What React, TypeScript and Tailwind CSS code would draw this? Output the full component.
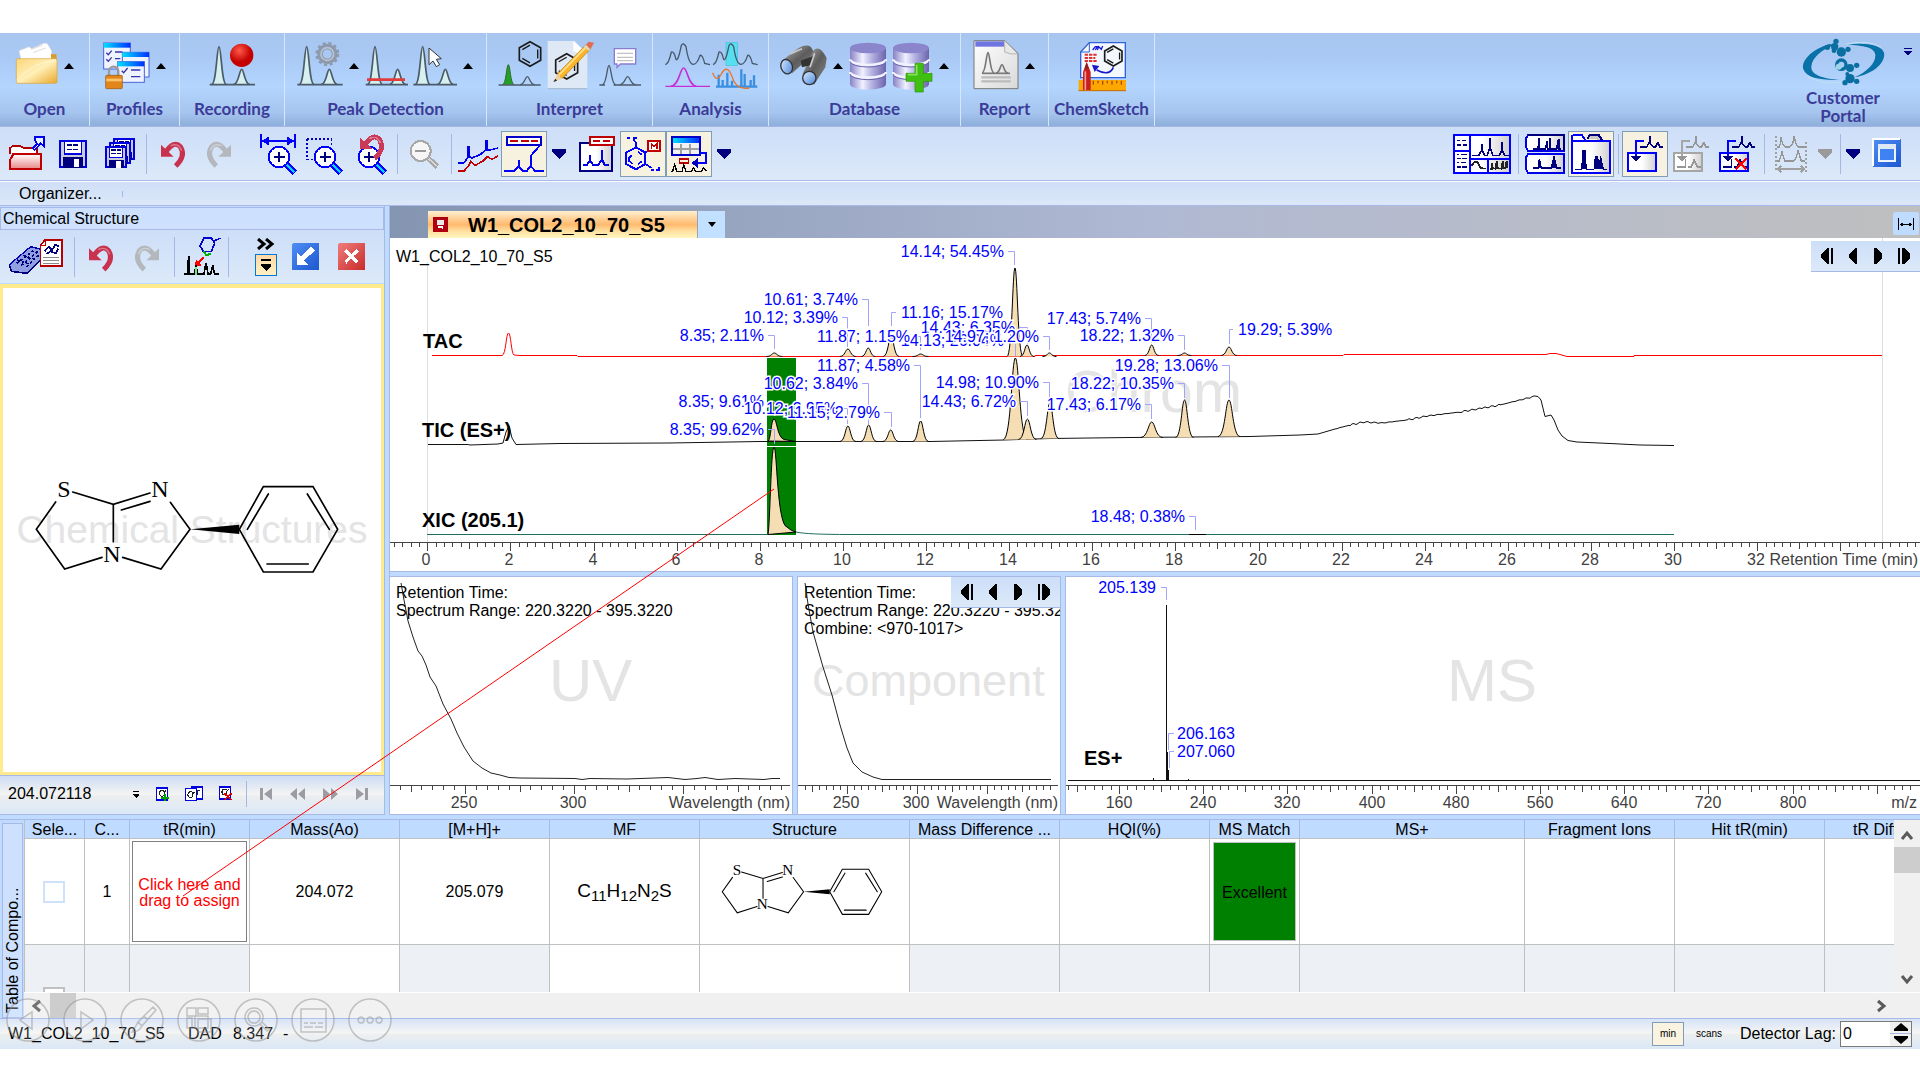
import React from 'react';

type Box = [number, number, number, number];

// Icons are drawn on a grid three times finer than their size on screen.
const Pic: React.FC<{ box: Box; crisp?: boolean; children: React.ReactNode }> = ({
  box,
  crisp,
  children,
}) => (
  <svg
    className="block shrink-0"
    viewBox={box.join(' ')}
    width={box[2] / 3}
    height={box[3] / 3}
    fill="none"
    shapeRendering={crisp ? 'crispEdges' : 'auto'}
    aria-hidden="true"
  >
    {children}
  </svg>
);

const peak = (cx: number, base: number, top: number, hw: number) =>
  `M${cx - hw} ${base}C${cx - hw * 0.35} ${base} ${cx - hw * 0.3} ${top} ${cx} ${top}` +
  `C${cx + hw * 0.3} ${top} ${cx + hw * 0.35} ${base} ${cx + hw} ${base}`;

const points = (list: number[][]) => list.map((p) => p.join(',')).join(' ');

/* ---------- ribbon ---------- */

const RibbonButton: React.FC<{ label: string; box: Box; children: React.ReactNode }> = ({
  label,
  box,
  children,
}) => (
  <button type="button" aria-label={label} className="hover:brightness-110">
    <Pic box={box}>{children}</Pic>
  </button>
);

const RibbonArrow: React.FC<{ label: string }> = ({ label }) => (
  <button type="button" aria-label={label} className="h-14 w-3">
    <svg viewBox="0 0 12 56" width="12" height="56" aria-hidden="true">
      <path d="M1 31L6 25L11 31Z" fill="#000" />
    </svg>
  </button>
);

const TwinPeaks: React.FC<{ x: number; fill?: string }> = ({ x, fill = '#d5f0ee' }) => (
  <g stroke="#4d5a68" strokeWidth="5" fill={fill}>
    <path d={peak(x + 28, 163, 50, 22)} />
    <path d={peak(x + 96, 163, 118, 24)} />
    <path d={`M${x} 164H${x + 136}`} />
  </g>
);

const Hexagon: React.FC<{ cx: number; cy: number; r: number }> = ({ cx, cy, r }) => {
  const ring = (k: number) =>
    [0, 1, 2, 3, 4, 5].map((i) => {
      const a = (Math.PI / 3) * i - Math.PI / 2;
      return [cx + r * k * Math.cos(a), cy + r * k * Math.sin(a)];
    });
  const o = ring(1);
  const n = ring(0.72);
  return (
    <g stroke="#1b1b1b" strokeWidth="5" fill="none">
      <polygon points={points(o)} />
      <path
        d={`M${n[0]}L${n[5]}M${n[1]}L${n[2]}M${n[3]}L${n[4]}`}
        strokeWidth="4"
      />
    </g>
  );
};

const Cylinder: React.FC<{ x: number }> = ({ x }) => (
  <g>
    <path d={`M${x} 54V162a54 17 0 0 0 108 0V54Z`} fill="url(#cyl)" />
    <ellipse cx={x + 54} cy="54" rx="54" ry="16" fill="#8b85cc" />
    <path
      d={`M${x} 88a54 17 0 0 0 108 0M${x} 126a54 17 0 0 0 108 0`}
      stroke="#f2f2ff"
      strokeWidth="8"
    />
    <path
      d={`M${x} 94a54 17 0 0 0 108 0M${x} 132a54 17 0 0 0 108 0`}
      stroke="#6d66ad"
      strokeWidth="3"
    />
  </g>
);

const RibbonGroup: React.FC<{ title: string; width: string; children: React.ReactNode }> = ({
  title,
  width,
  children,
}) => (
  <section
    className={`${width} shrink-0 border-r border-[#d6e6fb] pt-[5px] flex flex-col items-center`}
  >
    <div className="flex gap-[5px]">{children}</div>
    <h2 className="font-[Lato,sans-serif] text-[17px] leading-[30px] font-bold text-[#3b3b98] whitespace-nowrap">
      {title}
    </h2>
  </section>
);

const Ribbon = () => (
  <div className="flex h-[94px] border-b border-[#a4b5e0] bg-[linear-gradient(#a7c5ef,#a9c9f4_25%,#b3d5fe_58%,#a6c5ef_85%,#8eaedb)]">
    <svg width="0" height="0" className="absolute" aria-hidden="true">
      <defs>
        <linearGradient id="folder" x1="0" y1="0" x2="1" y2="1">
          <stop offset="0" stopColor="#fbd57a" />
          <stop offset=".5" stopColor="#fff0b8" />
          <stop offset="1" stopColor="#e9a92c" />
        </linearGradient>
        <linearGradient id="cyl">
          <stop offset="0" stopColor="#8781c6" />
          <stop offset=".35" stopColor="#f1f1ff" />
          <stop offset=".6" stopColor="#b6b3e2" />
          <stop offset="1" stopColor="#6b64ac" />
        </linearGradient>
        <radialGradient id="ball" cx=".4" cy=".3">
          <stop offset="0" stopColor="#ff5a4a" />
          <stop offset="1" stopColor="#c40000" />
        </radialGradient>
        <linearGradient id="lens" x1="0" y1="0" x2="1" y2="1">
          <stop offset="0" stopColor="#d9ecff" />
          <stop offset="1" stopColor="#4d86dc" />
        </linearGradient>
        <linearGradient id="barrel" x1="0" y1="0" x2="1" y2="1">
          <stop offset="0" stopColor="#b4b4b4" />
          <stop offset=".5" stopColor="#5c5c5c" />
          <stop offset="1" stopColor="#8c8c8c" />
        </linearGradient>
        <linearGradient id="page" x1="0" y1="0" x2="1" y2="1">
          <stop offset="0" stopColor="#fff" />
          <stop offset="1" stopColor="#d9d9d9" />
        </linearGradient>
        <linearGradient id="sky" x1="0" y1="0" x2="1" y2="0">
          <stop offset="0" stopColor="#00e0ff" />
          <stop offset="1" stopColor="#0030ff" />
        </linearGradient>
        <linearGradient id="shade" x1="0" y1="0" x2="1" y2="0">
          <stop offset="0" stopColor="#fff" />
          <stop offset=".5" stopColor="#fff" />
          <stop offset="1" stopColor="#cfcfcf" />
        </linearGradient>
        <linearGradient id="pink" x1="0" y1="0" x2="0" y2="1">
          <stop offset="0" stopColor="#fff" />
          <stop offset="1" stopColor="#e98a8a" />
        </linearGradient>
        <linearGradient id="blueBtn" x1="0" y1="0" x2="1" y2="1">
          <stop offset="0" stopColor="#4f8ef5" />
          <stop offset="1" stopColor="#1c57cf" />
        </linearGradient>
        <linearGradient id="redBtn" x1="0" y1="0" x2="1" y2="1">
          <stop offset="0" stopColor="#ef7c7c" />
          <stop offset="1" stopColor="#c92a2a" />
        </linearGradient>
      </defs>
    </svg>

    <RibbonGroup title="Open" width="w-[90px]">
      <RibbonButton label="Open" box={[42, 24, 129, 168]}>
        <path d="M60 90L54 62L84 50L92 56L128 40L138 40L152 62V92Z" fill="#fff" stroke="#d4d4d4" strokeWidth="2" />
        <path d="M90 58L124 46M96 68L134 54" stroke="#dcdcdc" strokeWidth="3" />
        <path d="M150 72H166L168 96H150Z" fill="#d99c2e" />
        <rect x="46" y="86" width="122" height="74" rx="5" fill="url(#folder)" stroke="#dba33a" strokeWidth="2" />
        <path d="M48 150Q90 100 164 90" stroke="#fff6d0" strokeWidth="3" />
      </RibbonButton>
      <RibbonArrow label="Open options" />
    </RibbonGroup>

    <RibbonGroup title="Profiles" width="w-[90px]">
      <RibbonButton label="Profiles" box={[306, 24, 141, 168]}>
        {[
          [308, 39],
          [364, 67],
          [350, 95],
        ].map(([x, y]) => (
          <g key={x}>
            <rect x={x} y={y} width="80" height={x === 308 ? 78 : x === 364 ? 74 : 62} fill="#eef3ff" stroke="#4b62d8" strokeWidth="3" />
            <rect x={x} y={y} width="80" height="14" fill="url(#sky)" />
          </g>
        ))}
        <path d="M316 68l6 6 10-12M342 66h22M316 88l6 6 10-12M342 86h16M362 122l6 6 12-14M390 120h28M390 140h28" stroke="#3737a8" strokeWidth="4" />
        <path d="M324 138v-14a14 14 0 0 1 28 0v14" stroke="#9a9a9a" strokeWidth="7" />
        <rect x="314" y="136" width="50" height="40" rx="3" fill="#e2861c" stroke="#96560f" strokeWidth="2" />
        <path d="M316 150h46" stroke="#ffc46b" strokeWidth="8" />
      </RibbonButton>
      <RibbonArrow label="Profiles options" />
    </RibbonGroup>

    <RibbonGroup title="Recording" width="w-[105px]">
      <RibbonButton label="Recording" box={[630, 24, 138, 168]}>
        <TwinPeaks x={632} />
        <circle cx="728" cy="76" r="35" fill="url(#ball)" />
      </RibbonButton>
    </RibbonGroup>

    <RibbonGroup title="Peak Detection" width="w-[202px]">
      <RibbonButton label="Auto peak detection" box={[891, 24, 138, 168]}>
        <TwinPeaks x={892} />
        <circle cx="982" cy="72" r="22" stroke="#8d9aae" strokeWidth="17" />
        <circle cx="982" cy="72" r="32" stroke="#8d9aae" strokeWidth="8" strokeDasharray="9 8" />
        <circle cx="982" cy="72" r="19" stroke="#b9c3d2" strokeWidth="5" />
      </RibbonButton>
      <RibbonArrow label="Auto peak detection options" />
      <RibbonButton label="Peak threshold" box={[1098, 24, 129, 168]}>
        <g transform="translate(-6 0)">
          <TwinPeaks x={1106} />
        </g>
        <path d="M1104 149H1218" stroke="#e23b3b" strokeWidth="8" />
      </RibbonButton>
      <RibbonButton label="Manual peak detection" box={[1242, 24, 132, 168]}>
        <TwinPeaks x={1243} />
        <path d="M1290 54V104L1302 93L1312 110L1322 104L1312 88L1327 86Z" fill="#fff" stroke="#333" strokeWidth="3" />
      </RibbonButton>
      <RibbonArrow label="Manual peak detection options" />
    </RibbonGroup>

    <RibbonGroup title="Interpret" width="w-[166px]">
      <RibbonButton label="Assign structure" box={[66, 24, 132, 168]}>
        <path d={peak(97, 164, 104, 18)} fill="#23a023" stroke="#2b6a2b" strokeWidth="3" />
        <path d={peak(154, 164, 140, 22)} stroke="#4d5a68" strokeWidth="4" />
        <path d="M68 165H194" stroke="#4d5a68" strokeWidth="4" />
        <Hexagon cx={162} cy={72} r={37} />
      </RibbonButton>
      <RibbonButton label="Edit structure" box={[201, 24, 141, 168]}>
        <path d="M203 33H284L322 72V176H203Z" fill="#dfe8f5" />
        <path d="M203 176H322" stroke="#a5b6cd" strokeWidth="3" />
        <path d="M280 33V62Q290 72 322 72Z" fill="#fff" />
        <Hexagon cx={260} cy={109} r={38} />
        <path d="M232 132L318 44L332 56L246 146Z" fill="#fbb52a" stroke="#b97a10" strokeWidth="2" />
        <path d="M236 136L322 47" stroke="#ffe08a" strokeWidth="5" />
        <path d="M318 44L326 35L342 38L332 56Z" fill="#e26a55" />
        <path d="M314 48L328 60" stroke="#d9d9d9" strokeWidth="6" />
        <path d="M232 132L220 156L246 146Z" fill="#f0cfa0" />
        <path d="M226 146L220 156L231 152Z" fill="#222" />
      </RibbonButton>
      <RibbonButton label="Annotate" box={[354, 24, 129, 168]}>
        <path d={peak(384, 164, 106, 20)} stroke="#4d5a68" strokeWidth="4" />
        <path d={peak(440, 164, 140, 24)} stroke="#4d5a68" strokeWidth="4" />
        <path d="M355 165H372M398 165H480" stroke="#4d5a68" strokeWidth="4" />
        <path d="M400 56H464V102H418L408 112V102H400Z" fill="#fff" stroke="#8a7ccf" strokeWidth="4" />
        <path d="M408 70H456M408 82H456M408 92H456" stroke="#c2c2c2" strokeWidth="4" />
      </RibbonButton>
    </RibbonGroup>

    <RibbonGroup title="Analysis" width="w-[116px]">
      <RibbonButton label="Analysis" box={[552, 24, 282, 168]}>
        <rect x="738" y="38" width="34" height="68" fill="#57dff0" stroke="#38c6de" strokeWidth="2" />
        {[0, 143].map((d) => (
          <g key={d} stroke="#47586b" strokeWidth="4">
            <path d={`M${556 + d} 104Q${566 + d} 102 ${574 + d} 66Q${582 + d} 62 ${588 + d} 88Q${594 + d} 96 ${604 + d} 46Q${610 + d} 36 ${618 + d} 50Q${626 + d} 104 ${640 + d} 103Q${652 + d} 102 ${660 + d} 76Q${668 + d} 74 ${674 + d} 100L${690 + d} 104`} />
          </g>
        ))}
        <path d={peak(611, 168, 114, 38)} stroke="#c62fd6" strokeWidth="5" />
        <path d="M556 169H690" stroke="#c62fd6" strokeWidth="4" />
        <path d="M708 170H832M716 170V134M728 170V150M742 170V128M756 170V152M784 170V118M794 170V132M812 170V150M822 170V136" stroke="#3a8fe0" strokeWidth="7" />
        <path d="M698 128Q710 160 724 132Q742 100 756 140Q768 182 808 174" stroke="#e8762c" strokeWidth="4" />
      </RibbonButton>
    </RibbonGroup>

    <RibbonGroup title="Database" width="w-[192px]">
      <RibbonButton label="Search database" box={[900, 24, 141, 168]}>
        <path d="M904 94L956 54Q978 42 992 50L1004 70L936 130Z" fill="url(#barrel)" />
        <path d="M968 132L1000 62Q1018 42 1040 84L1036 112L1002 164Z" fill="url(#barrel)" />
        <path d="M962 92L1000 78L990 106L966 112Z" fill="#333" />
        <path d="M930 72L966 56M1004 70L990 112" stroke="#c9c9c9" strokeWidth="5" />
        <ellipse cx="920" cy="110" rx="17" ry="22" fill="url(#lens)" stroke="#333" strokeWidth="4" transform="rotate(-18 920 110)" />
        <ellipse cx="988" cy="144" rx="20" ry="20" fill="url(#lens)" stroke="#333" strokeWidth="4" />
      </RibbonButton>
      <RibbonArrow label="Search options" />
      <RibbonButton label="Open database" box={[1107, 24, 114, 168]}>
        <Cylinder x={1110} />
      </RibbonButton>
      <RibbonButton label="Add to database" box={[1236, 24, 123, 168]}>
        <Cylinder x={1239} />
        <path d="M1305 100H1330V130H1356V154H1330V186H1305V154H1278V130H1305Z" fill="#3fbf10" stroke="#2c960a" strokeWidth="2" />
        <path d="M1310 104V134H1284" stroke="#86e45c" strokeWidth="5" />
      </RibbonButton>
      <RibbonArrow label="Database options" />
    </RibbonGroup>

    <RibbonGroup title="Report" width="w-[88px]">
      <RibbonButton label="Report" box={[39, 24, 138, 168]}>
        <path d="M42 32H134L174 70V176H42Z" fill="url(#page)" stroke="#777" strokeWidth="3" />
        <path d="M46 34H132V50H46Z" fill="#6f74e0" />
        <path d="M134 32V66Q150 74 174 72Z" fill="#e8e8e8" stroke="#999" strokeWidth="2" />
        <path d={peak(84, 129, 68, 18)} stroke="#777" strokeWidth="5" />
        <path d={peak(126, 129, 104, 18)} stroke="#777" strokeWidth="5" />
        <path d="M66 130H150" stroke="#777" strokeWidth="5" />
        <path d="M64 142H152M64 154H152" stroke="#bbb" strokeWidth="7" />
      </RibbonButton>
      <RibbonArrow label="Report options" />
    </RibbonGroup>

    <RibbonGroup title="ChemSketch" width="w-[106px]">
      <RibbonButton label="ChemSketch" box={[354, 24, 144, 168]}>
        <path d="M388 38H496V143H362V66Z" fill="#f3f8ff" stroke="#2f62d8" strokeWidth="4" />
        <path d="M388 38V66H362" stroke="#2f62d8" strokeWidth="3" />
        <path d="M398 60l8-10h6l-6 10M412 60l4-10 8 8 4-10" stroke="#1717d8" strokeWidth="4" />
        <path d="M374 74h36M374 84h32M374 93h36" stroke="#e03030" strokeWidth="6" strokeDasharray="10 3" />
        <Hexagon cx={460} cy={78} r={30} />
        <path d="M460 112Q448 140 410 120" stroke="#1717c8" strokeWidth="5" />
        <path d="M396 104L418 108L404 126Z" fill="#1717c8" />
        <rect x="356" y="150" width="142" height="32" fill="#fca800" />
        <path d="M356 182H498" stroke="#c46a00" strokeWidth="3" />
        <path d="M400 152v12M414 152v8M428 152v12M442 152v8M456 152v12M470 152v8M484 152v12" stroke="#b34a00" strokeWidth="4" />
        <path d="M380 96L392 126V180H369V126Z" fill="#c81e1e" />
        <path d="M376 124V180" stroke="#ff9a9a" strokeWidth="5" />
        <path d="M380 96L386 116H374Z" fill="#8a2020" />
      </RibbonButton>
    </RibbonGroup>

    <div className="flex flex-1 items-start justify-end pt-[5px] pr-2">
      <a href="#portal" className="mr-2 flex w-[106px] flex-col items-center font-[Lato,sans-serif] text-[17px] leading-[18px] font-bold text-[#3b3b98] text-center">
        <Pic box={[1086, 24, 249, 147]}>
          <path d="M1168 42C1110 60 1082 96 1090 118C1098 142 1140 152 1200 150C1146 146 1112 134 1114 110C1116 84 1146 56 1184 46Z" fill="#0871a8" />
          <path d="M1222 44C1270 36 1326 44 1332 68C1338 98 1300 132 1244 142C1280 126 1308 100 1306 74C1304 52 1270 46 1222 44Z" fill="#0871a8" />
          <path d="M1104 140Q1140 162 1204 158M1218 42Q1290 28 1324 52" stroke="#bfe3f3" strokeWidth="3" />
          <g fill="#0a6fa0">
            <circle cx="1188" cy="34" r="8" />
            <circle cx="1162" cy="52" r="8" />
            <circle cx="1184" cy="50" r="11" />
            <circle cx="1204" cy="66" r="14" />
            <circle cx="1224" cy="58" r="8" />
            <circle cx="1182" cy="62" r="7" />
            <circle cx="1230" cy="114" r="12" />
            <circle cx="1250" cy="106" r="8" />
            <circle cx="1230" cy="146" r="14" />
            <circle cx="1250" cy="154" r="8" />
            <circle cx="1215" cy="158" r="8" />
            <circle cx="1222" cy="132" r="6" />
          </g>
          <circle cx="1204" cy="104" r="14" stroke="#0a6fa0" strokeWidth="10" />
          <circle cx="1196" cy="110" r="9" fill="#9fd3e6" />
        </Pic>
        <span className="pt-0.5">Customer Portal</span>
      </a>
      <button type="button" aria-label="Ribbon options" className="mt-2.5 w-2">
        <svg width="8" height="8" viewBox="0 0 8 8" shapeRendering="crispEdges" aria-hidden="true">
          <path d="M0 0H8V1H0ZM0 3H8L4 8Z" fill="#00007f" />
        </svg>
      </button>
    </div>
  </div>
);

/* ---------- toolbars ---------- */

const Tool: React.FC<{
  label: string;
  box: Box;
  pressed?: boolean;
  disabled?: boolean;
  soft?: boolean;
  children: React.ReactNode;
}> = ({ label, box, pressed, disabled, soft, children }) => (
  <button
    type="button"
    aria-label={label}
    aria-pressed={pressed}
    disabled={disabled}
    className={
      pressed
        ? 'flex h-[46px] w-[46px] shrink-0 items-center overflow-hidden bg-[#f7f2df] outline outline-1 -outline-offset-1 outline-[#7f9db9]'
        : 'flex h-[46px] shrink-0 items-center overflow-hidden'
    }
  >
    <Pic box={box} crisp={!soft}>
      {children}
    </Pic>
  </button>
);

const Sep = () => (
  <span className="flex w-2 shrink-0 justify-center" aria-hidden="true">
    <span className="h-10 w-px bg-[#a4b7e6]" />
  </span>
);

const DropArrow: React.FC<{ label: string; width: string; color?: string }> = ({
  label,
  width,
  color = '#00007f',
}) => (
  <button type="button" aria-label={label} className={`${width} flex h-[46px] shrink-0 items-center justify-center`}>
    <svg width="14" height="10" viewBox="0 0 14 10" shapeRendering="crispEdges" aria-hidden="true">
      <path d="M0 0H14V3L7 10L0 3Z" fill={color} />
    </svg>
  </button>
);

const UndoShape: React.FC<{ x: number; y: number; color: string; flip?: boolean }> = ({
  x,
  y,
  color,
  flip,
}) => (
  <g transform={flip ? `translate(${x + 72} ${y}) scale(-1 1)` : `translate(${x} ${y})`}>
    <path d="M14 32Q40 -4 58 16Q76 44 44 74" stroke={color} strokeWidth="15" />
    <path d="M0 10V46H38Z" fill={color} />
    <path d="M28 14Q52 2 62 28" stroke="#fff" strokeOpacity=".35" strokeWidth="4" />
  </g>
);

const Magnifier: React.FC<{ x: number; y: number }> = ({ x, y }) => (
  <g>
    <circle cx={x} cy={y} r="31" fill="#fff" stroke="#0000ff" strokeWidth="6" />
    <path d={`M${x - 15} ${y}h32M${x} ${y - 16}v32`} stroke="#00007f" strokeWidth="6" />
    <path d={`M${x + 22} ${y + 22}l26 26`} stroke="#0000ff" strokeWidth="18" />
    <path d={`M${x + 24} ${y + 24}l22 22`} stroke="#00d8ff" strokeWidth="7" />
  </g>
);

const Floppy: React.FC<{ x: number; y: number; s: number }> = ({ x, y, s }) => (
  <g>
    <rect x={x} y={y} width={s} height={s} fill="#0000e0" />
    <rect x={x + 5} y={y + 5} width={s - 10} height={s - 10} fill="#c8ccd8" />
    <rect x={x + s * 0.2} y={y + 4} width={s * 0.6} height={s * 0.45} fill="#fff" stroke="#0000e0" strokeWidth="4" />
    <path d={`M${x + s * 0.28} ${y + s * 0.18}h${s * 0.44}M${x + s * 0.28} ${y + s * 0.34}h${s * 0.44}`} stroke="#00007f" strokeWidth="4" strokeDasharray="14 5" />
    <rect x={x + s * 0.16} y={y + s * 0.62} width={s * 0.7} height={s * 0.38} fill="#00007f" />
    <rect x={x + s * 0.52} y={y + s * 0.68} width={s * 0.2} height={s * 0.3} fill="#fff" />
  </g>
);

const LoadFrame: React.FC<{ x: number; color: string; line: string; filled?: boolean }> = ({
  x,
  color,
  line,
  filled,
}) => (
  <g>
    <rect x={x + 18} y="369" width="84" height="54" fill="url(#shade)" stroke={color} strokeWidth="6" />
    <path d={`M${x + 42} 384V333H${x + 66}`} stroke={color} strokeWidth="6" />
    <path d={`M${x + 27} 378H${x + 57}L${x + 42} 396Z`} fill={line} />
    <path d={`M${x + 54} 351H${x + 74}L${x + 82} 336V318M${x + 84} 318V340L${x + 94} 351H${x + 100}L${x + 108} 338L${x + 114} 351H${x + 124}`} stroke={line} strokeWidth="5" />
    {filled && (
      <path d={`M${x + 26} 411H${x + 52}V388M${x + 60} 411H${x + 70}L${x + 78} 390L${x + 88} 411H${x + 98}`} stroke={line} strokeWidth="5" />
    )}
  </g>
);

const MainToolbar = () => (
  <div role="toolbar" aria-label="Main" className="flex h-[54px] items-center border-b border-[#a9b9e9] bg-linear-to-b from-[#cddef8] to-[#dce9f9] pl-1 pr-2">
    <Tool label="Open file" box={[12, 303, 138, 138]}>
      <path d="M30 372V354L38 348H62L70 354H110V372" fill="#fff" stroke="#b00000" strokeWidth="5" />
      <path d="M30 416V390L40 372H122V416Z" fill="url(#pink)" stroke="#c00000" strokeWidth="6" />
      <path d="M98 354L112 342L104 330V321H132V350L122 340L104 360Z" fill="#e8f4ff" stroke="#0000e8" strokeWidth="5" />
    </Tool>
    <Tool label="Save" box={[150, 303, 138, 138]}>
      <Floppy x={177} y={330} s={84} />
    </Tool>
    <Tool label="Save all" box={[288, 303, 138, 138]}>
      <Floppy x={339} y={324} s={66} />
      <Floppy x={327} y={336} s={66} />
      <Floppy x={315} y={348} s={66} />
    </Tool>
    <Sep />
    <Tool label="Undo" box={[450, 303, 138, 138]} soft>
      <UndoShape x={483} y={334} color="#c8324f" />
    </Tool>
    <Tool label="Redo" box={[588, 303, 138, 138]} disabled soft>
      <UndoShape x={621} y={334} color="#b4b8bd" flip />
    </Tool>
    <div className="ml-[13px]">
      <Tool label="Zoom horizontally" box={[765, 303, 138, 138]}>
        <path d="M783 312V354M885 312V354M786 333H882" stroke="#0000ff" strokeWidth="6" />
        <path d="M786 333L806 320V346ZM882 333L862 320V346Z" fill="#0000ff" />
        <Magnifier x={837} y={381} />
      </Tool>
    </div>
    <Tool label="Zoom in" box={[903, 303, 138, 138]}>
      <path d="M921 327H996M921 327V388H942M994 327V346" stroke="#0000c0" strokeWidth="5" strokeDasharray="6 6" />
      <Magnifier x={975} y={381} />
    </Tool>
    <Tool label="Undo zoom" box={[1041, 303, 138, 138]}>
      <Magnifier x={1107} y={381} />
      <UndoShape x={1080} y={312} color="#c83a58" />
    </Tool>
    <Sep />
    <Tool label="Zoom out" box={[1203, 303, 138, 138]} disabled>
      <circle cx="1262" cy="363" r="30" fill="#f6f6f6" stroke="#a8a8a8" strokeWidth="6" />
      <path d="M1246 363h32" stroke="#9a9a9a" strokeWidth="6" />
      <path d="M1284 384l28 26" stroke="#a8a8a8" strokeWidth="16" />
      <path d="M1286 386l24 22" stroke="#d8d8d8" strokeWidth="5" />
    </Tool>
    <Sep />
    <Tool label="Overlay curves" box={[-75, 303, 138, 138]}>
      <path d="M-66 398H-48L-36 382V348M-33 348V380L-24 384L0 374L18 360V330M22 330V362L54 354" stroke="#0000e8" strokeWidth="5" />
      <path d="M-66 423H-48L-36 410L-28 394L-14 406L10 392L22 380L36 388L54 378" stroke="#c00000" strokeWidth="5" />
    </Tool>
    <Tool label="Peak labels" box={[63, 303, 138, 138]} pressed>
      <rect x="81" y="321" width="102" height="24" fill="#fff" stroke="#0000c8" strokeWidth="6" />
      <path d="M90 333H174" stroke="#c00000" strokeWidth="5" strokeDasharray="24 8" />
      <path d="M178 348L154 376V408M72 423H102L116 410V390V410L128 423H140L152 408L166 423H192" stroke="#0000ff" strokeWidth="6" />
    </Tool>
    <DropArrow label="Peak label options" width="w-6" />
    <div className="ml-[3px]">
      <Tool label="Annotations" box={[282, 303, 138, 138]}>
        <rect x="300" y="339" width="96" height="84" fill="url(#shade)" stroke="#00007f" strokeWidth="6" />
        <rect x="330" y="321" width="72" height="24" fill="#fff" stroke="#c00000" strokeWidth="6" />
        <path d="M338 333H396" stroke="#c00000" strokeWidth="5" strokeDasharray="22 8" />
        <path d="M310 405H320L330 392V374V392L340 405H354L366 388V360V388L374 405H386" stroke="#0000e0" strokeWidth="6" />
      </Tool>
    </div>
    <Tool label="Show structures" box={[420, 303, 138, 138]} pressed>
      <path d="M468 352L496 368V402L468 418L438 402V368Z" stroke="#0000ff" strokeWidth="6" />
      <path d="M456 376L446 384V392L458 402M474 366L486 374M474 402L486 394M468 352V338L460 328M442 324h8M460 324h10M496 402L514 414M514 420h8M528 420h8V412M496 368L506 360" stroke="#0000ff" strokeWidth="5" />
      <rect x="504" y="333" width="36" height="30" fill="#fff" stroke="#c00000" strokeWidth="6" />
      <path d="M514 356V342L522 350L530 342V356" stroke="#c00000" strokeWidth="5" />
    </Tool>
    <Tool label="Show table" box={[558, 303, 138, 138]} pressed>
      <rect x="576" y="321" width="84" height="54" fill="#f2f2f2" stroke="#0000c8" strokeWidth="6" />
      <rect x="579" y="324" width="78" height="15" fill="url(#sky)" />
      <path d="M579 356H657M603 341V372M630 341V372" stroke="#a0a0a0" strokeWidth="5" />
      <path d="M660 369H678V399H640" stroke="#0000ff" strokeWidth="6" />
      <path d="M634 399L654 384V414Z" fill="#0000c0" />
      <rect x="598" y="387" width="27" height="12" stroke="#c00000" strokeWidth="5" />
      <path d="M573 424H578L584 404L590 424H606L611 404L618 424H634L640 414L648 424H664L670 414L680 424" stroke="#000" strokeWidth="4" />
    </Tool>
    <DropArrow label="Table options" width="w-6" />

    <div className="ml-auto flex items-center">
      <Tool label="Full layout" box={[30, 303, 192, 138]}>
        <rect x="42" y="315" width="168" height="114" fill="url(#shade)" stroke="#0000ff" strokeWidth="6" />
        <path d="M90 315V429M42 363H90M90 387H210M144 387V429" stroke="#0000ff" strokeWidth="6" />
        <path d="M50 332h10M66 332h12M50 345h14M70 345h10M50 374h8M64 374h16M50 386h12M66 386h14M50 398h8M64 398h14M50 411h12M66 411h14" stroke="#00007f" strokeWidth="4" />
        <path d="M96 376H116L126 360V342V360L134 376H142L150 352V324V352L158 376H178L186 360V336V360L194 376H206" stroke="#00007f" strokeWidth="5" />
        <path d="M94 408L104 396H112L122 414L138 416M150 416H156V400V414L166 416L170 394V414L184 416L188 394V414H196L200 392V414" stroke="#222" strokeWidth="5" />
      </Tool>
      <Sep />
      <Tool label="Two windows" box={[246, 303, 138, 138]}>
        <path d="M264 315H372V363H264L258 352V326ZM264 372H372V429H264L258 418V382Z" fill="url(#shade)" stroke="#0000e8" strokeWidth="6" />
        <path d="M264 315H372V363" stroke="#00007f" strokeWidth="6" />
        <path d="M280 357H294L298 324V357H316L322 332V357H330V324M330 330V357H350V357L356 326V357H364" stroke="#00007f" strokeWidth="5" />
        <path d="M280 414H294L298 386L304 414H334L342 378L350 414H362" fill="#00007f" stroke="#00007f" strokeWidth="4" />
      </Tool>
      <Tool label="Tabbed window" box={[384, 303, 138, 138]} pressed>
        <path d="M396 333V318L402 315H426L434 328V333" fill="#fff" stroke="#0000ff" strokeWidth="6" />
        <path d="M442 326L450 315H476L486 330" fill="#c8c8c8" stroke="#00007f" strokeWidth="6" />
        <rect x="396" y="333" width="114" height="96" fill="url(#shade)" stroke="#0000ff" strokeWidth="6" />
        <path d="M406 417H424L428 384V360H436V384L440 417H462L466 378H472L478 402L482 378L490 417H502" fill="#00007f" stroke="#00007f" strokeWidth="3" />
      </Tool>
      <Sep />
      <Tool label="Load into window" box={[546, 303, 138, 138]} pressed>
        <LoadFrame x={546} color="#0000ff" line="#00007f" />
      </Tool>
      <Tool label="Add to window" box={[684, 303, 138, 138]} disabled>
        <LoadFrame x={684} color="#a6a6a6" line="#969696" filled />
      </Tool>
      <Tool label="Replace in window" box={[822, 303, 138, 138]}>
        <LoadFrame x={822} color="#0000ff" line="#00007f" filled />
        <path d="M886 384L920 418M920 384L886 418" stroke="#ff0000" strokeWidth="7" />
      </Tool>
      <Sep />
      <Tool label="Link windows" box={[984, 303, 138, 138]} disabled>
        <path d="M1008 318V426M1098 336V426" stroke="#a0a0a0" strokeWidth="5" strokeDasharray="6 6" />
        <path d="M1010 351H1018L1022 336V320L1028 342L1036 351H1050L1058 342L1062 318L1068 342L1076 351H1098M1010 393H1018L1026 366L1034 393H1060L1068 384L1074 362L1084 393H1096" stroke="#969696" strokeWidth="4" />
        <path d="M1014 417H1092M1024 407L1014 417L1024 427M1082 407L1092 417L1082 427" stroke="#a0a0a0" strokeWidth="5" />
      </Tool>
      <DropArrow label="Link options" width="w-[22px]" color="#9a9a9a" />
      <Sep />
      <DropArrow label="More options" width="w-[18px]" />
      <div className="ml-1">
        <Tool label="Restore window" box={[1278, 303, 138, 138]}>
          <rect x="1299" y="327" width="84" height="84" fill="url(#blueBtn)" />
          <path d="M1299 408V327H1380" stroke="#fff" strokeWidth="5" />
          <rect x="1317" y="345" width="48" height="48" fill="#3f82f4" stroke="#eef4ff" strokeWidth="6" />
          <rect x="1314" y="342" width="54" height="15" fill="#dfe8f5" />
        </Tool>
      </div>
    </div>
  </div>
);

/* ---------- chemical structure ---------- */

const Molecule: React.FC<{ width: number; height: number; font: number; pen: number }> = ({
  width,
  height,
  font,
  pen,
}) => (
  <svg viewBox="96 108 930 300" width={width} height={height} className="block overflow-visible" aria-hidden="true">
    <g stroke="#000" strokeWidth={pen} fill="none" strokeLinecap="round">
      <path d="M218 159L340 196L450 162M364 213L450 187M340 196V308M306 355L194 390L109 271L167 189M368 355L483 390L570 271L511 190" />
      <path d="M718 271L790 143H939L1013 271L939 399H790ZM742 271L805 165M922 165L988 271M801 375H925" />
    </g>
    <path d="M570 271L718 257V285Z" fill="#000" />
    <g fontFamily="'Liberation Serif', serif" fontSize={font} textAnchor="middle">
      <text x="192" y="174">S</text>
      <text x="480" y="173">N</text>
      <text x="336" y="368">N</text>
    </g>
  </svg>
);

const PlayerIcon: React.FC<{ label: string; d: string }> = ({ label, d }) => (
  <button type="button" aria-label={label} disabled className="flex w-8 shrink-0 justify-center">
    <svg width="18" height="14" viewBox="0 0 18 14" aria-hidden="true">
      <path d={d} fill="#9b9da2" />
    </svg>
  </button>
);

const StructurePanel = () => (
  <aside className="flex w-[385px] shrink-0 flex-col border-r border-[#a9b9e5] bg-[#bfdbff]">
    <h3 className="mt-px h-[23px] border border-[#a9b9e5] bg-[#cde1ff] pl-0.5 text-base leading-[21px]">
      Chemical Structure
    </h3>
    <div role="toolbar" aria-label="Structure" className="flex h-[53px] items-center bg-linear-to-b from-[#cddef8] to-[#dce9f9] pl-0.5">
      <Tool label="Calculate from report" box={[6, 609, 204, 144]}>
        <path d="M28 704L92 650L140 662L136 676L82 730L34 724Z" fill="#8f9fe0" stroke="#0000b0" strokeWidth="4" />
        <path d="M28 704L34 724L82 730L136 676" stroke="#00007f" strokeWidth="5" />
        <path d="M50 700L100 662M64 706L114 664M80 710L124 668M52 690L92 704M70 676L110 690" stroke="#00007f" strokeWidth="5" strokeDasharray="8 6" />
        <path d="M136 629H186V708H121V646Z" fill="#fff" stroke="#b80000" strokeWidth="5" />
        <path d="M136 629V646H121" stroke="#b80000" strokeWidth="5" />
        <path d="M134 664L146 650L156 660L166 644L178 650M140 672L152 664L168 670L174 656" stroke="#00007f" strokeWidth="5" />
        <path d="M130 682H178M130 691H178M130 700H178" stroke="#8a8a8a" strokeWidth="4" />
      </Tool>
      <Sep />
      <Tool label="Undo" box={[234, 609, 138, 144]} soft>
        <UndoShape x={267} y={645} color="#c8324f" />
      </Tool>
      <Tool label="Redo" box={[372, 609, 138, 144]} disabled soft>
        <UndoShape x={405} y={645} color="#b4b8bd" flip />
      </Tool>
      <Sep />
      <Tool label="Assign to peak" box={[534, 609, 138, 144]}>
        <path d="M612 624H634L644 640L634 664H610L600 648ZM640 634L662 624" stroke="#0000d0" strokeWidth="5" />
        <path d="M610 664L620 676L634 670" stroke="#00b000" strokeWidth="6" />
        <path d="M612 682L592 700" stroke="#ff0000" strokeWidth="6" />
        <path d="M584 710L588 688L606 706Z" fill="#ff0000" />
        <path d="M552 732H562L566 678V732H582L588 710L594 732H612L618 698L624 732H632L638 706L644 732H656" stroke="#000" strokeWidth="5" />
        <path d="M588 712V734" stroke="#7ee07e" strokeWidth="8" />
      </Tool>
      <Sep />
      <div className="ml-[11px] flex w-[46px] flex-col items-center gap-1">
        <button type="button" aria-label="More tools">
          <svg width="18" height="12" viewBox="0 0 18 12" aria-hidden="true">
            <path d="M1 1L7 6L1 11M9 1L15 6L9 11" stroke="#000" strokeWidth="3" fill="none" />
          </svg>
        </button>
        <button type="button" aria-label="Toolbar options" className="flex h-[22px] w-[22px] items-center justify-center border border-[#0078d7] bg-linear-to-b from-[#ffd9a5] to-[#fdf0c4]">
          <svg width="12" height="12" viewBox="0 0 12 12" shapeRendering="crispEdges" aria-hidden="true">
            <path d="M1 0H11V2H1ZM1 5H11V7L6 12L1 7Z" fill="#000" />
          </svg>
        </button>
      </div>
      <Tool label="Detach panel" box={[867, 609, 120, 144]}>
        <rect x="876" y="639" width="82" height="82" rx="6" fill="url(#blueBtn)" />
        <path d="M890 668V704H926L912 692L944 662L932 650L902 680Z" fill="#fff" />
      </Tool>
      <Tool label="Close panel" box={[987, 609, 126, 144]}>
        <rect x="1014" y="639" width="82" height="82" rx="6" fill="url(#redBtn)" />
        <path d="M1036 661L1072 697M1072 661L1036 697" stroke="#fff" strokeWidth="10" />
      </Tool>
    </div>
    <div className="mt-px grid flex-1 place-items-center border-[3px] border-t-4 border-[#ffeb8e] bg-white pb-0.5">
      <span className="[grid-area:1/1] text-[39px] leading-none whitespace-nowrap text-[#e4e4e4]">
        Chemical Structures
      </span>
      <div className="[grid-area:1/1] pb-2 pr-2.5">
        <Molecule width={310} height={100} font={72} pen={5} />
      </div>
    </div>
    <div className="flex h-10 items-center border-y border-[#a9b9e5] bg-[linear-gradient(#cddcf3,#f4f4f3_48%,#eceeef_52%,#dbe8f8)] pl-2 pb-0.5">
      <input aria-label="Monoisotopic mass" defaultValue="204.072118" className="w-[120px] bg-transparent text-base outline-none" />
      <button type="button" aria-label="Mass type" className="w-4">
        <svg width="6" height="7" viewBox="0 0 6 7" className="mx-auto" shapeRendering="crispEdges" aria-hidden="true">
          <path d="M0 0H6V1H0ZM0 3H6V4L3 7L0 4Z" fill="#000" />
        </svg>
      </button>
      <Tool label="Add structure" box={[432, 1010, 102, 108]}>
        <rect x="470" y="1046" width="33" height="36" fill="#fff" stroke="#0000e0" strokeWidth="4" />
        <path d="M492 1056a8 9 0 1 0 0 12v-8l6-6" stroke="#222" strokeWidth="3" />
        <path d="M494 1064V1086M483 1075H506" stroke="#00a000" strokeWidth="6" />
      </Tool>
      <Tool label="Copy structure" box={[534, 1010, 96, 108]}>
        <rect x="574" y="1043" width="34" height="36" fill="#fff" stroke="#0000e0" strokeWidth="4" />
        <rect x="556" y="1048" width="34" height="36" fill="#fff" stroke="#0000e0" strokeWidth="4" />
        <path d="M578 1060a8 9 0 1 0 0 12v-8l6-6M592 1066v-12l8-2" stroke="#222" strokeWidth="3" />
      </Tool>
      <Tool label="Delete structure" box={[630, 1010, 96, 108]}>
        <rect x="659" y="1043" width="33" height="36" fill="#fff" stroke="#0000e0" strokeWidth="4" />
        <path d="M680 1052a8 9 0 1 0 0 12v-8l6-6" stroke="#222" strokeWidth="3" />
        <path d="M673 1062L695 1082M695 1062L673 1082" stroke="#e00000" strokeWidth="5" />
      </Tool>
      <span className="ml-1 h-[26px] w-px bg-[#a4b7e6]" />
      <div className="ml-[3px] flex items-center">
        <PlayerIcon label="First structure" d="M3 1H6V13H3ZM15 1V13L7 7Z" />
        <PlayerIcon label="Previous structure" d="M8 1V13L1 7ZM16 1V13L9 7Z" />
        <PlayerIcon label="Next structure" d="M2 1V13L9 7ZM10 1V13L17 7Z" />
        <PlayerIcon label="Last structure" d="M3 1V13L11 7ZM12 1H15V13H12Z" />
      </div>
    </div>
  </aside>
);

/* ---------- charts ---------- */

const PlotNav: React.FC<{ name: string; place: string }> = ({ name, place }) => (
  <div className={`${place} absolute right-0 flex w-[109px] items-center justify-evenly border-b border-[#a9b9e5] bg-linear-to-b from-[#cddef8] to-[#dce9f9]`}>
    {[
      ['First', 'M11 0V16H9L3 10V6L9 0ZM13 0H15V16H13Z'],
      ['Previous', 'M13 0V16H11L5 10V6L11 0Z'],
      ['Next', 'M5 0V16H7L13 10V6L7 0Z'],
      ['Last', 'M3 0H5V16H3ZM7 0V16H9L15 10V6L9 0Z'],
    ].map(([step, d]) => (
      <button type="button" key={step} aria-label={`${step} ${name}`}>
        <svg width="18" height="16" viewBox="0 0 18 16" shapeRendering="crispEdges" aria-hidden="true">
          <path d={d} fill="#000" />
        </svg>
      </button>
    ))}
  </div>
);

const halo = 'fill-[#0000ff] [paint-order:stroke] stroke-white [stroke-width:3px]';

const rt = (t: number) => 427.3 + 41.56 * t;

// time, base, top, half width
const tacPeaks = [
  [8.35, 356, 353, 8],
  [10.12, 356, 349, 8],
  [10.61, 356, 348, 7],
  [11.16, 356, 336, 8],
  [11.87, 356, 354, 8],
  [14.14, 356, 268, 8],
  [14.43, 356, 345, 7],
  [14.97, 356, 353, 7],
  [17.43, 355, 345, 7],
  [18.22, 355, 353, 7],
  [19.29, 355, 347, 8],
];

const ticPeaks = [
  [10.12, 441, 426, 8],
  [10.62, 441, 425, 8],
  [11.15, 441, 430, 8],
  [11.87, 441, 421, 8],
  [14.15, 439, 358, 12],
  [14.44, 439, 419, 9],
  [14.98, 438, 403, 9],
  [17.43, 437, 422, 11],
  [18.22, 437, 400, 9],
  [19.29, 436, 400, 11],
];

// text, end of text, baseline, peak x, end of leader
const peakLabels: [string, number, number, number, number][] = [
  ['14.43; 6.35%', 1014, 333, 1027, 344],
  ['14.13; 26.04%', 1003, 346, 1015, 356],
  ['14.14; 54.45%', 1003, 257, 1014, 265],
  ['10.61; 3.74%', 857, 305, 868, 326],
  ['10.12; 3.39%', 837, 323, 847, 347],
  ['8.35; 2.11%', 763, 341, 774, 349],
  ['11.87; 1.15%', 909, 342, 920, 350],
  ['14.97; 1.20%', 1038, 342, 1049, 350],
  ['17.43; 5.74%', 1140, 324, 1151, 343],
  ['18.22; 1.32%', 1173, 341, 1184, 350],
  ['11.87; 4.58%', 909, 371, 920, 418],
  ['10.62; 3.84%', 857, 389, 868, 424],
  ['8.35; 9.61%', 763, 407, 774, 416],
  ['10.12; 3.95%', 837, 414, 847, 424],
  ['11.15; 2.79%', 879, 418, 891, 427],
  ['8.35; 99.62%', 763, 435, 774, 444],
  ['14.98; 10.90%', 1038, 388, 1049, 402],
  ['14.43; 6.72%', 1015, 407, 1027, 416],
  ['17.43; 6.17%', 1140, 410, 1151, 419],
  ['18.22; 10.35%', 1173, 389, 1184, 398],
  ['19.28; 13.06%', 1217, 371, 1229, 398],
  ['18.48; 0.38%', 1184, 522, 1195, 530],
];

const rightLabels: [string, number, number, number, number][] = [
  ['11.16; 15.17%', 901, 318, 891, 326],
  ['19.29; 5.39%', 1238, 335, 1229, 344],
];

// Slight detector noise on the rising part of the TIC.
const noise = (i: number) => Math.sin(i * 2.3) * 0.5 + Math.sin(i * 0.9) * 0.5;

const ramp = [
  [1318, 434],
  [1335, 429],
  [1350, 425],
  [1364, 422],
  [1382, 423],
  [1407, 420],
  [1427, 416],
  [1460, 412],
  [1483, 408],
  [1500, 405],
  [1520, 400],
  [1536, 396],
];

const rampLine = () => {
  const out: number[][] = [];
  for (let k = 0; k < ramp.length - 1; k++) {
    const [x0, y0] = ramp[k];
    const [x1, y1] = ramp[k + 1];
    for (let x = x0; x < x1; x += 2) {
      const y = y0 + ((y1 - y0) * (x - x0)) / (x1 - x0);
      out.push([x, y + (x > 1335 ? noise(x) : 0)]);
    }
  }
  return out;
};

const Chromatogram = () => {
  const ticks: number[] = [];
  for (let i = -4; i <= 179; i++) ticks.push(i);
  return (
    <svg viewBox="390 238 1530 333" className="block w-full bg-white text-base" role="img" aria-label="Chromatograms">
      <text x="1065" y="412" fontSize="59" fill="#e4e4e4">Chrom</text>
      <path d="M427.5 262V542M1882.5 238V542" stroke="#dedede" fill="none" />
      <rect x="767" y="358" width="29" height="177" fill="#008000" />
      <path d="M767 446.5H796" stroke="#fff" />

      <path
        d="M432 355.5H502C506 355 506 333 508.5 333S511 353 514 355L520 355.5H577L578 356.5H1035V355.5H1343L1344 354.5H1546L1550 353.5H1556L1560 354.5L1567 356.5H1634V355.5H1882"
        fill="none"
        stroke="#ff0000"
      />
      <g fill="#f5deb3" stroke="#000">
        {tacPeaks.map(([t, b, top, hw]) => (
          <path key={t} d={peak(rt(t), b + 0.5, top, hw)} />
        ))}
      </g>

      <polyline
        fill="none"
        stroke="#111"
        points={points([
          [428, 444.5],
          [468, 444.5],
          [470, 445],
          [498, 444],
          [503, 443],
          [506, 432],
          [509, 426],
          [512, 438],
          [516, 444.5],
          [560, 443.5],
          [668, 443],
          [700, 442.5],
          [760, 441.5],
          [930, 441.5],
          [1004, 440],
          [1050, 438.5],
          [1130, 437.5],
          [1250, 436.5],
          [1300, 435],
          ...rampLine(),
          [1538, 396.5],
          [1541, 400],
          [1545, 416.5],
          [1551, 415],
          [1554, 420],
          [1558, 430],
          [1562, 436],
          [1568, 440.5],
          [1577, 442],
          [1610, 443.5],
          [1640, 445],
          [1674, 445.5],
        ])}
      />
      <path d="M768 441C771 440 771 419 774 419S777 437 784 439.5L796 441.5Z" fill="#f5deb3" stroke="#000" />
      <g fill="#f5deb3" stroke="#000">
        {ticPeaks.map(([t, b, top, hw]) => (
          <path key={t} d={peak(rt(t), b + 0.5, top, hw)} />
        ))}
      </g>

      <path d="M427 534.5H768M796 532Q806 534.5 850 534.5H1674" fill="none" stroke="#1e6e5e" />
      <path d="M768 534.5C770 525 771 447 774 447C777 447 777 525 787 527Q791 531 796 532L768 534.5" fill="#f5deb3" stroke="#000" />
      <path d="M1189 534.5H1206" stroke="#000" />

      <g fill="none" stroke="#a3a3fa">
        {peakLabels.map(([text, end, y, x, to]) => (
          <path key={text} d={`M${end + 5} ${y - 5.5}H${x + 0.5}V${to}`} />
        ))}
        {rightLabels.map(([text, start, y, x, to]) => (
          <path key={text} d={`M${start - 5} ${y - 5.5}H${x + 0.5}V${to}`} />
        ))}
      </g>
      <g className={halo}>
        {peakLabels.map(([text, end, y]) => (
          <text key={text} x={end + 1} y={y} textAnchor="end">{text}</text>
        ))}
        {rightLabels.map(([text, start, y]) => (
          <text key={text} x={start} y={y}>{text}</text>
        ))}
      </g>

      <text x="396" y="262">W1_COL2_10_70_S5</text>
      <g className="text-xl font-bold">
        <text x="423" y="348">TAC</text>
        <text x="422" y="437">TIC (ES+)</text>
        <text x="422" y="527">XIC (205.1)</text>
      </g>

      <path d="M390 542.5H1920" stroke="#444" />
      <path
        stroke="#444"
        d={ticks
          .map((i) => `M${Math.round(rt(i / 5)) + 0.5} 542V${i % 10 === 0 ? 551 : i % 5 === 0 ? 549 : 547}`)
          .join('')}
      />
      <g fill="#3f3f3f" textAnchor="middle">
        {[0, 2, 4, 6, 8, 10, 12, 14, 16, 18, 20, 22, 24, 26, 28, 30, 32].map((t) => (
          <text key={t} x={Math.round(rt(t)) - 1} y="565">{t}</text>
        ))}
      </g>
      <text x="1918" y="565" fill="#3f3f3f" textAnchor="end">Retention Time (min)</text>
    </svg>
  );
};

const Spectrum: React.FC<{
  name: string;
  left: number;
  width: number;
  at250: number;
  step: number;
  mark: string;
  markSize: number;
  markX: number;
  markY: number;
  lines: string[];
  curve: number[][];
}> = ({ name, left, width, at250, step, mark, markSize, markX, markY, lines, curve }) => {
  const ticks: number[] = [];
  for (let nm = 220; nm <= 395; nm += 5) ticks.push(nm);
  return (
    <svg viewBox={`${left} 577 ${width} 237`} className="block w-full bg-white text-base" role="img" aria-label={name}>
      <text x={markX} y={markY} fontSize={markSize} fill="#e4e4e4">{mark}</text>
      {lines.map((line, i) => (
        <text key={line} x={left + 6} y={598 + i * 18}>{line}</text>
      ))}
      <polyline points={points(curve)} fill="none" stroke="#222" />
      <path d={`M${left} 785.5H${left + width - 2}`} stroke="#444" />
      <path
        stroke="#444"
        d={ticks
          .map((nm) => `M${Math.round(at250 + (nm - 250) * step) + 0.5} 785V${nm % 50 === 0 ? 794 : nm % 25 === 0 ? 792 : 790}`)
          .join('')}
      />
      <g fill="#3f3f3f">
        <text x={at250 - 1} y="808" textAnchor="middle">250</text>
        <text x={Math.round(at250 + 50 * step) - 1} y="808" textAnchor="middle">300</text>
        <text x={left + width - 2} y="808" textAnchor="end">Wavelength (nm)</text>
      </g>
    </svg>
  );
};

const mz = (m: number) => 1119 + (m - 160) * 1.0525;

const MassSpectrum = () => {
  const ticks: number[] = [];
  for (let m = 112; m <= 912; m += 8) ticks.push(m);
  return (
    <svg viewBox="1066 577 854 237" className="block w-full bg-white text-base" role="img" aria-label="Mass spectrum">
      <text x="1447" y="701" fontSize="60" fill="#e4e4e4">MS</text>
      <path d="M1068 780.5H1920" stroke="#111" />
      <path d="M1166.5 605V780M1167.5 752V780M1168.5 770V780M1153.5 778V780M1188.5 779V780" stroke="#111" />
      <path d="M1161 587.5H1166.5V600M1174 733.5H1168.5V750M1174 751.5H1169.5V768" fill="none" stroke="#a3a3fa" />
      <g fill="#0000ff">
        <text x="1156" y="593" textAnchor="end">205.139</text>
        <text x="1177" y="739">206.163</text>
        <text x="1177" y="757">207.060</text>
      </g>
      <text x="1084" y="765" className="text-xl font-bold">ES+</text>
      <path d="M1066 785.5H1920" stroke="#444" />
      <path
        stroke="#444"
        d={ticks
          .map((m) => `M${Math.round(mz(m)) + 0.5} 785V${m % 80 === 0 ? 794 : m % 40 === 0 ? 792 : 790}`)
          .join('')}
      />
      <g fill="#3f3f3f">
        {[160, 240, 320, 400, 480, 560, 640, 720, 800].map((m) => (
          <text key={m} x={Math.round(mz(m))} y="808" textAnchor="middle">{m}</text>
        ))}
        <text x="1917" y="808" textAnchor="end">m/z</text>
      </g>
    </svg>
  );
};

const uvCurve = [
  [401, 583], [404, 600], [408, 621], [413, 637], [418, 651], [422, 656], [426, 665], [430, 677],
  [436, 686], [443, 704], [451, 719], [457, 733], [464, 747], [473, 761], [482, 768], [491, 773],
  [500, 775], [509, 777.5], [520, 778], [575, 778.5], [582, 779.5], [590, 778.5], [627, 779],
  [668, 777.5], [685, 779.5], [697, 778.5], [705, 777.5], [718, 779.5], [735, 778.5], [764, 779.5], [772, 778.5], [780, 778.5],
];

const componentCurve = [
  [805, 583], [808, 604], [813, 632], [823, 667], [832, 695], [840, 725], [847, 748], [853, 763],
  [862, 772], [873, 777], [882, 779.5], [1051, 779.5],
];

const Plots = () => (
  <main className="flex min-w-0 flex-1 flex-col border-l border-[#a9b9e5] bg-[#bfdbff]">
    <div className="flex h-8 items-end bg-linear-to-r from-[#8495b2] via-[#b0b9d3] to-[#bfbfbf] pl-[38px]">
      <button type="button" className="flex h-[27px] w-[269px] items-center gap-5 bg-[linear-gradient(#fff0d0,#ffd199_28%,#ffba6e_50%,#ffe0a0_75%,#fff6c0)] pl-[5px] text-xl leading-none font-bold">
        <svg width="15" height="15" viewBox="0 0 15 15" shapeRendering="crispEdges" aria-hidden="true">
          <rect width="15" height="15" fill="#b00010" />
          <path d="M4 3H11V8H4Z" fill="#e8e8e8" />
          <path d="M5 9H10V12H9L8 11H5Z" fill="#fff" />
        </svg>
        W1_COL2_10_70_S5
      </button>
      <button type="button" aria-label="Open documents" className="ml-px flex h-[27px] w-[27px] items-center justify-center bg-[#c2e0ff]">
        <svg width="8" height="5" viewBox="0 0 8 5" aria-hidden="true">
          <path d="M0 0H8L4 5Z" fill="#000" />
        </svg>
      </button>
      <button type="button" aria-label="Fit width" className="mr-px mb-[3px] ml-auto flex h-[23px] w-[26px] items-center justify-center rounded-xs bg-[#bfdbff]">
        <svg width="16" height="12" viewBox="0 0 16 12" shapeRendering="crispEdges" aria-hidden="true">
          <path d="M0 0H1V12H0ZM15 0H16V12H15ZM2 6H14V7H2ZM3 5H5V8H3ZM11 5H13V8H11Z" fill="#000" />
        </svg>
      </button>
    </div>
    <div className="relative border-b border-[#a9b9e5]">
      <Chromatogram />
      <PlotNav name="chromatogram" place="top-[3px] h-[31px]" />
    </div>
    <div className="mt-[5px] grid grid-cols-[minmax(0,402fr)_minmax(0,262fr)_minmax(0,854fr)] gap-1.5 border-b border-[#a9b9e5] bg-[#bfdbff]">
      <div className="outline outline-1 outline-[#a9b9e5]">
        <Spectrum
          name="UV spectrum"
          left={390}
          width={402}
          at250={465}
          step={2.18}
          mark="UV"
          markSize={60}
          markX={549}
          markY={701}
          lines={['Retention Time:', 'Spectrum Range: 220.3220 - 395.3220']}
          curve={uvCurve}
        />
      </div>
      <div className="relative outline outline-1 outline-[#a9b9e5]">
        <Spectrum
          name="Component spectrum"
          left={798}
          width={262}
          at250={847}
          step={1.4}
          mark="Component"
          markSize={45}
          markX={812}
          markY={696}
          lines={['Retention Time:', 'Spectrum Range: 220.3220 - 395.3220', 'Combine: <970-1017>']}
          curve={componentCurve}
        />
        <PlotNav name="component" place="top-0 h-[31px]" />
      </div>
      <div className="outline outline-1 outline-[#a9b9e5]">
        <MassSpectrum />
      </div>
    </div>
  </main>
);

/* ---------- table of components ---------- */

const columns: [string, string][] = [
  ['Sele...', 'w-[60px]'],
  ['C...', 'w-[45px]'],
  ['tR(min)', 'w-[120px]'],
  ['Mass(Ao)', 'w-[150px]'],
  ['[M+H]+', 'w-[150px]'],
  ['MF', 'w-[150px]'],
  ['Structure', 'w-[210px]'],
  ['Mass Difference ...', 'w-[150px]'],
  ['HQI(%)', 'w-[150px]'],
  ['MS Match', 'w-[90px]'],
  ['MS+', 'w-[225px]'],
  ['Fragment Ions', 'w-[150px]'],
  ['Hit tR(min)', 'w-[150px]'],
  ['tR Difference', 'w-[150px]'],
];

const editable = ['Mass(Ao)', 'MF', 'Structure'];

const Chevron: React.FC<{ label: string; d: string; place: string }> = ({ label, d, place }) => (
  <button type="button" aria-label={label} className={`${place} flex shrink-0 items-center justify-center`}>
    <svg width="14" height="14" viewBox="0 0 14 14" aria-hidden="true">
      <path d={d} stroke="#5a5a5a" strokeWidth="3" fill="none" />
    </svg>
  </button>
);

const cell = 'border-r border-b border-[#c0c0c0] p-0 text-center align-middle';

const Check: React.FC<{ label: string; tone: string }> = ({ label, tone }) => (
  <input
    type="checkbox"
    aria-label={label}
    className={`${tone} ml-[18px] block h-[22px] w-[22px] appearance-none border-2 bg-white checked:bg-[#7fa8e8]`}
  />
);

const Components = () => (
  <section className="flex border-t border-[#a9b9e5] bg-[#bfdbff]">
    <h3 className="mt-[3px] mr-px ml-0.5 flex w-[21px] items-center border border-[#a9b9e5] bg-[#cde1ff] pt-1 text-base leading-[19px] whitespace-nowrap [writing-mode:vertical-rl] rotate-180">
      Table of Compo...
    </h3>
    <div className="min-w-0 flex-1">
      <div className="flex">
        <div className="h-[172px] min-w-0 flex-1 overflow-hidden border-l border-[#c0c0c0] bg-white">
          <table className="w-[1950px] table-fixed border-separate border-spacing-0 text-base leading-[17px]">
            <thead>
              <tr className="h-[19px]">
                {columns.map(([name, width]) => (
                  <th key={name} className={`${width} border-r border-b border-r-[#a9b9e5] border-b-[#c0c0c0] bg-[#bfdbff] p-0 font-normal whitespace-nowrap`}>
                    {name}
                  </th>
                ))}
              </tr>
            </thead>
            <tbody>
              <tr className="h-[106px] bg-white">
                <td className={cell}>
                  <Check label="Select component 1" tone="border-[#d0e1fc]" />
                </td>
                <td className={cell}>1</td>
                <td className={cell}>
                  <button type="button" className="h-[101px] w-[115px] border border-[#808080] pt-0.5 leading-4 text-[#ff0000]">
                    Click here and drag to assign
                  </button>
                </td>
                <td className={cell}>204.072</td>
                <td className={cell}>205.079</td>
                <td className={`${cell} pb-0.5 text-[19px]`}>
                  C<sub className="-bottom-1 text-[15px]">11</sub>H<sub className="-bottom-1 text-[15px]">12</sub>N
                  <sub className="-bottom-1 text-[15px]">2</sub>S
                </td>
                <td className={cell}>
                  <div className="ml-5 pb-1">
                    <Molecule width={164} height={53} font={86} pen={6} />
                  </div>
                </td>
                <td className={cell} />
                <td className={cell} />
                <td className={cell}>
                  <div className="mx-auto grid h-[99px] w-[83px] place-items-center border border-[#c0c0c0] bg-[#008000] pt-0.5">
                    Excellent
                  </div>
                </td>
                <td className={cell} />
                <td className={cell} />
                <td className={cell} />
                <td className={cell} />
              </tr>
              <tr className="h-[106px]">
                {columns.map(([name], i) => (
                  <td key={name} className={`${cell} ${editable.includes(name) ? 'bg-white' : 'bg-[#edf0f5]'}`}>
                    {i === 0 && <Check label="Select component 2" tone="border-[#c0c0c0]" />}
                  </td>
                ))}
              </tr>
            </tbody>
          </table>
        </div>
        <div className="flex w-[26px] shrink-0 flex-col bg-[#f0f0f0]">
          <Chevron label="Scroll up" d="M2 10L7 4L12 10" place="h-[27px] pt-1" />
          <div className="h-[26px] bg-[#cdcdcd]" />
          <Chevron label="Scroll down" d="M2 4L7 10L12 4" place="mt-auto h-[27px]" />
        </div>
      </div>
      <div className="flex h-[26px] border-t border-white bg-[#f0f0f0]">
        <Chevron label="Scroll left" d="M10 2L4 7L10 12" place="h-[25px] w-[26px]" />
        <div className="w-[26px] bg-[#cdcdcd]" />
        <Chevron label="Scroll right" d="M4 2L10 7L4 12" place="mr-[26px] ml-auto h-[25px] w-[26px]" />
      </div>
    </div>
  </section>
);

const StatusBar = () => (
  <footer className="flex h-[31px] items-center border-t border-[#a9b9e9] bg-[linear-gradient(#d6e3f7,#f5f5f4_46%,#ecefef_50%,#dae7f7)] pl-2 pr-2 pb-px text-base">
    <span className="w-[180px]">W1_COL2_10_70_S5</span>
    <span className="w-[45px]">DAD</span>
    <span className="w-[50px]">8.347</span>
    <span>-</span>
    <button type="button" aria-pressed="true" className="ml-auto h-6 w-8 border border-[#7f9db9] bg-[#f9f3e0] text-[10px]">
      min
    </button>
    <button type="button" className="w-[50px] text-[10px]">scans</button>
    <label htmlFor="lag" className="ml-1.5">Detector Lag:</label>
    <div className="ml-1 flex h-[26px] w-[72px] border border-[#7a7a7a] bg-white">
      <input id="lag" defaultValue="0" className="w-12 min-w-0 flex-1 pl-0.5 text-base outline-none" />
      <div className="flex w-[21px] flex-col divide-y divide-[#a9b9e5] bg-[#f0f0f0]">
        <button type="button" aria-label="Increase lag" className="flex flex-1 items-center justify-center">
          <svg width="14" height="8" viewBox="0 0 14 8" aria-hidden="true">
            <path d="M7 0L14 6V8H0V6Z" fill="#000" />
          </svg>
        </button>
        <button type="button" aria-label="Decrease lag" className="flex flex-1 items-center justify-center">
          <svg width="14" height="8" viewBox="0 0 14 8" aria-hidden="true">
            <path d="M7 8L14 2V0H0V2Z" fill="#000" />
          </svg>
        </button>
      </div>
    </div>
  </footer>
);

/* ---------- slide show controls ---------- */

const controls: [string, React.ReactNode][] = [
  ['Previous slide', <path key="p" d="M26 14V31L14 22Z" />],
  ['Next slide', <path key="n" d="M18 14V31L30 22Z" />],
  ['Pen', <path key="i" d="M33 9L36 12L22 28L18 24ZM18 24L22 28Q19 34 12 34Q15 30 18 24ZM24 18L28 22" />],
  ['All slides', <path key="a" d="M10 10H19V18H10ZM21 10H31V16H21ZM10 20H15V30H10ZM18 18H31V30H18ZM21 21H34V34H21Z" />],
  ['Zoom into slide', <path key="z" d="M20 10a9 9 0 1 0 .1 0ZM20 13a6 6 0 1 0 .1 0ZM26 26L33 33L35 31L28 24" />],
  ['Subtitles', <path key="s" d="M10 11H35V34H10ZM13 25H17M19 25H25M27 25H32M13 29H22M24 29H32" />],
  ['More', <path key="m" d="M13 19a3 3 0 1 0 .1 0ZM22 19a3 3 0 1 0 .1 0ZM31 19a3 3 0 1 0 .1 0Z" />],
];

const SlideControls = () => (
  <div className="absolute bottom-[7px] left-[6px] flex gap-[13px]">
    {controls.map(([label, shape]) => (
      <button type="button" key={label} aria-label={label} className="h-11 w-11 rounded-full">
        <svg viewBox="0 0 44 44" className="h-11 w-11" fill="none" stroke="#909090" strokeOpacity=".5" strokeWidth="1.5" aria-hidden="true">
          <circle cx="22" cy="22" r="21" fill="#fff" fillOpacity=".15" />
          {shape}
        </svg>
      </button>
    ))}
  </div>
);

const App: React.FC = () => (
  <div className="bg-white pt-[33px] pb-8 font-['Liberation_Sans',Arial,sans-serif] text-black">
    <Ribbon />
    <MainToolbar />
    <div className="mt-px flex h-6 items-center border-b border-[#a9b9e9] bg-linear-to-b from-[#cfdff7] to-[#dce8f9] pl-[19px] text-base">
      <span className="w-[103px]">Organizer...</span>
      <span className="h-1.5 w-px bg-[#a4b7e6]" />
    </div>
    <div className="relative">
      <div className="flex bg-[#bfdbff] pb-1">
        <StructurePanel />
        <div className="w-1 shrink-0 bg-[#bfdbff]" />
        <Plots />
      </div>
      <Components />
      <StatusBar />
      <svg className="pointer-events-none absolute top-0 left-0" width="800" height="700" viewBox="0 206 800 700" aria-hidden="true">
        <path d="M183 896L774 489" stroke="#ff0000" />
      </svg>
      <SlideControls />
    </div>
  </div>
);

export default App;
